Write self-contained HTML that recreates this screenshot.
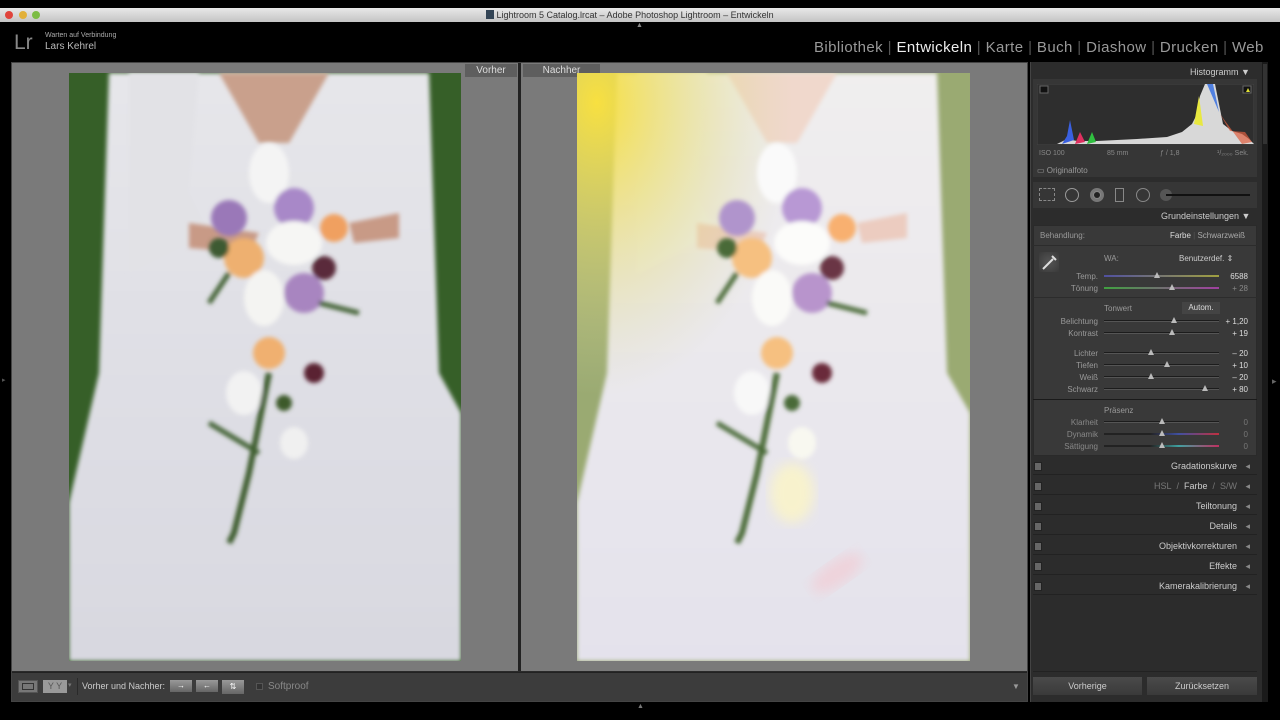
<!DOCTYPE html>
<html><head><meta charset="utf-8"><style>
*{margin:0;padding:0;box-sizing:border-box}
body{width:1280px;height:720px;background:#000;position:relative;overflow:hidden;font-family:"Liberation Sans",sans-serif;color:#bbb}
.a{position:absolute}
.t{position:absolute;white-space:nowrap;font-size:8px;color:#aaa}
.r{text-align:right}
.trk{position:absolute;height:2px;background:#1c1c1c;border-bottom:1px solid #555}
.th{position:absolute;width:0;height:0;border-left:3px solid transparent;border-right:3px solid transparent;border-bottom:6px solid #bbb}
.sec{position:absolute;left:1033px;width:224px;height:18px;border-bottom:1px solid #222;font-size:9px;color:#ccc;text-align:right;padding-right:20px;line-height:18px}
.sec:before{content:"";position:absolute;left:1px;top:5px;width:6px;height:7px;background:#666;border:1px solid #222}
.sec:after{content:"◂";position:absolute;right:7px;top:0;color:#888;font-size:9px}
</style></head><body>
<div class="a" style="left:0;top:8px;width:1280px;height:14px;background:linear-gradient(#e8e8e8,#c4c4c4)"></div>
<div class="a" style="left:5px;top:11px;width:8px;height:8px;border-radius:50%;background:#e0443c"></div>
<div class="a" style="left:19px;top:11px;width:8px;height:8px;border-radius:50%;background:#e2b03a"></div>
<div class="a" style="left:32px;top:11px;width:8px;height:8px;border-radius:50%;background:#7cbc45"></div>
<div class="t" style="left:486px;top:10px;font-size:9px;color:#333"><span style="display:inline-block;width:8px;height:9px;background:#345;vertical-align:-1px"></span> Lightroom 5 Catalog.lrcat – Adobe Photoshop Lightroom – Entwickeln</div>
<div class="t" style="left:14px;top:31px;font-size:21px;color:#888">Lr</div>
<div class="t" style="left:45px;top:32px;font-size:7px;color:#aaa">Warten auf Verbindung</div>
<div class="t" style="left:45px;top:41px;font-size:10px;color:#bbb">Lars Kehrel</div>
<div class="t" style="left:814px;top:39px;font-size:15px;letter-spacing:0.4px;color:#999">Bibliothek <span style="color:#555">|</span> <span style="color:#eee">Entwickeln</span> <span style="color:#555">|</span> Karte <span style="color:#555">|</span> Buch <span style="color:#555">|</span> Diashow <span style="color:#555">|</span> Drucken <span style="color:#555">|</span> Web</div>
<div class="t" style="left:636px;top:22px;font-size:7px;color:#888">▲</div>
<div class="a" style="left:11px;top:62px;width:1017px;height:640px;background:#2a2a2a;border:1px solid #444"></div>
<div class="a" style="left:12px;top:63px;width:506px;height:608px;background:#7a7a7a"></div>
<div class="a" style="left:521px;top:63px;width:506px;height:608px;background:#7a7a7a"></div>
<div class="a" style="left:518px;top:63px;width:3px;height:608px;background:#222"></div>
<div class="a" style="left:465px;top:64px;width:52px;height:13px;background:#5e5e5e;color:#ddd;font-size:10px;text-align:center;line-height:13px">Vorher</div>
<div class="a" style="left:523px;top:64px;width:77px;height:13px;background:#5e5e5e;color:#ddd;font-size:10px;text-align:center;line-height:13px">Nachher</div>
<svg class="a" style="left:69px;top:73px" width="392" height="588" viewBox="0 0 392 588">
<defs>
<linearGradient id="dg" x1="0" y1="0" x2="0" y2="1"><stop offset="0" stop-color="#e6e6ea"/><stop offset="1" stop-color="#d8d8e0"/></linearGradient>
<filter id="bl"><feGaussianBlur stdDeviation="6"/></filter>
<filter id="bl2"><feGaussianBlur stdDeviation="2"/></filter>
</defs>
<rect width="392" height="588" fill="#365f28"/>
<path d="M40 0 L360 0 L370 300 L392 340 L392 588 L0 588 L0 430 L30 300 Z" fill="url(#dg)" filter="url(#bl2)"/>
<path d="M60 0 L130 0 L120 120 L140 160 L60 200 Z" fill="#e2e2e6" filter="url(#bl2)"/>
<path d="M150 0 L260 0 L220 70 L190 70 Z" fill="#c9a08c" filter="url(#bl2)"/>
<path d="M120 150 L190 160 L180 180 L120 175 Z" fill="#c89a86" filter="url(#bl2)"/>
<path d="M280 150 L330 140 L330 165 L285 170 Z" fill="#c89a86" filter="url(#bl2)"/>
<g filter="url(#bl2)">
<ellipse cx="200" cy="100" rx="20" ry="30" fill="#f4f4f4"/>
<circle cx="160" cy="145" r="18" fill="#9a78b8"/><circle cx="225" cy="135" r="20" fill="#a888c8"/>
<circle cx="175" cy="185" r="20" fill="#eeb070"/><circle cx="265" cy="155" r="14" fill="#f0a060"/>
<ellipse cx="225" cy="170" rx="28" ry="22" fill="#f6f6f4"/><circle cx="235" cy="220" r="20" fill="#a885c0"/>
<ellipse cx="195" cy="225" rx="20" ry="28" fill="#f4f4f2"/><circle cx="200" cy="280" r="16" fill="#f0b070"/>
<circle cx="150" cy="175" r="10" fill="#3d5a30"/><circle cx="255" cy="195" r="12" fill="#5a2a3a"/>
<circle cx="245" cy="300" r="10" fill="#5a2030"/><ellipse cx="175" cy="320" rx="18" ry="22" fill="#f2f2f2"/>
<ellipse cx="225" cy="370" rx="14" ry="16" fill="#f0f0f0"/><circle cx="215" cy="330" r="8" fill="#3c5a2c"/>
<path d="M200 300 L180 400 L165 460 L160 470" stroke="#3a5a2a" stroke-width="6" fill="none"/>
<path d="M160 200 L140 230 M250 230 L290 240 M190 380 L140 350" stroke="#3f6030" stroke-width="5" fill="none"/>
</g>
</svg>
<svg class="a" style="left:577px;top:73px" width="393" height="588" viewBox="0 0 393 588">
<defs>
<linearGradient id="dg2" x1="0" y1="0" x2="0" y2="1"><stop offset="0" stop-color="#f0eeee"/><stop offset="1" stop-color="#e4e2ec"/></linearGradient>
<radialGradient id="yg" cx="0.05" cy="0.05" r="0.5"><stop offset="0" stop-color="#f8e040"/><stop offset="1" stop-color="#d8d8a0" stop-opacity="0"/></radialGradient>
</defs>
<rect width="393" height="588" fill="#9aaa72"/>
<path d="M40 0 L360 0 L370 300 L393 340 L393 588 L0 588 L0 430 L30 300 Z" fill="url(#dg2)" filter="url(#bl2)"/>
<path d="M60 0 L130 0 L120 120 L140 160 L60 200 Z" fill="#eeeeee" filter="url(#bl2)"/>
<path d="M150 0 L260 0 L220 70 L190 70 Z" fill="#f0d8cc" filter="url(#bl2)"/>
<path d="M120 150 L190 160 L180 180 L120 175 Z" fill="#ecccc0" filter="url(#bl2)"/>
<path d="M280 150 L330 140 L330 165 L285 170 Z" fill="#ecccc0" filter="url(#bl2)"/>
<rect width="393" height="588" fill="url(#yg)"/>
<g filter="url(#bl2)">
<ellipse cx="200" cy="100" rx="20" ry="30" fill="#fafafa"/>
<circle cx="160" cy="145" r="18" fill="#b094cc"/><circle cx="225" cy="135" r="20" fill="#b898d4"/>
<circle cx="175" cy="185" r="20" fill="#f6c080"/><circle cx="265" cy="155" r="14" fill="#f8b070"/>
<ellipse cx="225" cy="170" rx="28" ry="22" fill="#fcfcfa"/><circle cx="235" cy="220" r="20" fill="#b894cc"/>
<ellipse cx="195" cy="225" rx="20" ry="28" fill="#fafaf8"/><circle cx="200" cy="280" r="16" fill="#f6c080"/>
<circle cx="150" cy="175" r="10" fill="#4a6a38"/><circle cx="255" cy="195" r="12" fill="#6a3444"/>
<circle cx="245" cy="300" r="10" fill="#6a2a3a"/><ellipse cx="175" cy="320" rx="18" ry="22" fill="#f8f8f8"/>
<ellipse cx="225" cy="370" rx="14" ry="16" fill="#f8f8f0"/><circle cx="215" cy="330" r="8" fill="#4a6a38"/>
<path d="M200 300 L180 400 L165 460 L160 470" stroke="#4a6a36" stroke-width="6" fill="none"/>
<path d="M160 200 L140 230 M250 230 L290 240 M190 380 L140 350" stroke="#4a6a38" stroke-width="5" fill="none"/>
</g>
<ellipse cx="215" cy="420" rx="22" ry="30" fill="#fff8c0" opacity=".7" filter="url(#bl)"/>
<ellipse cx="260" cy="500" rx="30" ry="12" fill="#f4c8d0" opacity=".6" filter="url(#bl)" transform="rotate(-35 260 500)"/>
</svg>
<div class="a" style="left:12px;top:672px;width:1015px;height:29px;background:#3c3c3c;border-top:1px solid #222"></div>
<div class="a" style="left:18px;top:680px;width:20px;height:13px;background:#777;border:1px solid #555"><div style="margin:2px 3px;height:7px;border:1px solid #333"></div></div>
<div class="a" style="left:43px;top:680px;width:24px;height:13px;background:#999;color:#555;font-size:9px;text-align:center;line-height:13px">Y Y</div>
<div class="t" style="left:68px;top:681px;font-size:7px;color:#777">▾</div>
<div class="a" style="left:77px;top:678px;width:1px;height:17px;background:#2a2a2a"></div>
<div class="t" style="left:82px;top:681px;font-size:9px;color:#ccc">Vorher und Nachher:</div>
<div class="a" style="left:170px;top:680px;width:22px;height:12px;background:linear-gradient(#999,#666);color:#fff;font-size:8px;text-align:center;line-height:12px">→</div>
<div class="a" style="left:196px;top:680px;width:22px;height:12px;background:linear-gradient(#999,#666);color:#fff;font-size:8px;text-align:center;line-height:12px">←</div>
<div class="a" style="left:222px;top:680px;width:22px;height:14px;background:linear-gradient(#999,#666);color:#fff;font-size:8px;text-align:center;line-height:14px">⇅</div>
<div class="a" style="left:256px;top:683px;width:7px;height:7px;background:#333;border:1px solid #555"></div>
<div class="t" style="left:268px;top:681px;font-size:10px;color:#888">Softproof</div>
<div class="t" style="left:1012px;top:682px;font-size:8px;color:#999">▼</div>
<div class="t" style="left:637px;top:703px;font-size:7px;color:#777">▲</div>
<div class="t" style="left:2px;top:376px;font-size:7px;color:#555">▸</div>
<div class="t" style="left:1272px;top:376px;font-size:9px;color:#666">▸</div>
<div class="a" style="left:1030px;top:62px;width:232px;height:640px;background:#2c2c2c;border-left:1px solid #444"></div>
<div class="a" style="left:1262px;top:62px;width:6px;height:640px;background:#1a1a1a"></div>
<div class="a" style="left:1263px;top:64px;width:4px;height:80px;background:#333"></div>
<div class="t" style="left:1190px;top:67px;font-size:9px;color:#ccc">Histogramm ▼</div>
<div class="a" style="left:1033px;top:79px;width:224px;height:98px;background:#363636"></div>
<svg class="a" style="left:1037px;top:84px" width="217" height="61" viewBox="0 0 217 61">
<rect width="217" height="61" fill="#2e2e2e" stroke="#444"/>
<path d="M20 60 L30 55 L40 57 L60 57 L100 55 L130 53 L145 48 L155 40 L160 30 L163 12 L168 0 L178 0 L182 20 L186 40 L195 47 L205 50 L212 55 L217 60 Z" fill="#d8d8d8"/>
<path d="M157 40 L162 12 L166 42 Z" fill="#e8e840"/>
<path d="M170 0 L176 0 L182 28 Z" fill="#5080e0"/>
<path d="M25 60 L30 52 L33 36 L37 56 Z" fill="#3a60e0"/>
<path d="M38 60 L43 48 L48 58 Z" fill="#e03060"/>
<path d="M50 60 L55 48 L59 58 Z" fill="#30c040"/>
<path d="M183 30 L193 47 L208 48 L215 58 L205 60 Z" fill="#e06040" opacity=".7"/>
<rect x="3" y="2" width="8" height="7" fill="#111" stroke="#666"/><rect x="206" y="2" width="8" height="7" fill="#111" stroke="#666"/>
<path d="M209 8 L211 4 L213 8Z" fill="#dd3"/>
</svg>
<div class="t" style="left:1039px;top:150px;font-size:7px;color:#888">ISO 100</div>
<div class="t" style="left:1107px;top:150px;font-size:7px;color:#888">85 mm</div>
<div class="t" style="left:1160px;top:150px;font-size:7px;color:#888">ƒ / 1,8</div>
<div class="t" style="left:1217px;top:150px;font-size:7px;color:#888">¹/₂₀₀₀ Sek.</div>
<div class="t" style="left:1037px;top:166px;font-size:8px;color:#999">▭ Originalfoto</div>
<div class="a" style="left:1033px;top:182px;width:224px;height:26px;background:#363636"></div>
<div class="a" style="left:1039px;top:188px;width:16px;height:13px;border:1px dashed #888"></div>
<div class="a" style="left:1065px;top:188px;width:14px;height:14px;border:1px solid #999;border-radius:50%"></div>
<div class="a" style="left:1090px;top:188px;width:14px;height:14px;background:#888;border-radius:50%;border:3px solid #777"><div style="width:6px;height:6px;margin:1px;background:#222;border-radius:50%"></div></div>
<div class="a" style="left:1115px;top:188px;width:9px;height:14px;border:1px solid #888"></div>
<div class="a" style="left:1136px;top:188px;width:14px;height:14px;border:1px solid #888;border-radius:50%"></div>
<div class="a" style="left:1160px;top:189px;width:12px;height:12px;background:#555;border-radius:50%"></div>
<div class="a" style="left:1166px;top:194px;width:84px;height:2px;background:#111"></div>
<div class="t" style="left:1161px;top:211px;font-size:9px;color:#ccc">Grundeinstellungen ▼</div>
<div class="a" style="left:1033px;top:225px;width:224px;height:231px;background:#393939;border:1px solid #2a2a2a"></div>
<div class="a" style="left:1033px;top:245px;width:224px;height:1px;background:#2c2c2c"></div>
<div class="a" style="left:1033px;top:297px;width:224px;height:1px;background:#2c2c2c"></div>
<div class="a" style="left:1033px;top:399px;width:224px;height:1px;background:#1a1a1a"></div>
<div class="t" style="left:1040px;top:231px;font-size:8px;color:#999">Behandlung:</div>
<div class="t" style="left:1170px;top:231px;font-size:8px;color:#ddd">Farbe <span style="color:#555">|</span> <span style="color:#aaa">Schwarzweiß</span></div>
<div class="a" style="left:1039px;top:252px;width:20px;height:20px;background:radial-gradient(#555,#393939)"></div>
<svg class="a" style="left:1040px;top:252px" width="20" height="20"><path d="M3 17 L13 7 M12 4 L16 8" stroke="#ddd" stroke-width="2"/></svg>
<div class="t" style="left:1104px;top:254px;font-size:8px;color:#999">WA:</div>
<div class="t" style="left:1179px;top:254px;font-size:8px;color:#ccc">Benutzerdef. ⇕</div>
<div class="t" style="left:1104px;top:304px;font-size:8px;color:#999">Tonwert</div>
<div class="a" style="left:1182px;top:302px;width:38px;height:12px;background:#444;font-size:8px;color:#ddd;text-align:center;line-height:12px">Autom.</div>
<div class="t" style="left:1104px;top:406px;font-size:8px;color:#999">Präsenz</div>
<div class="a" style="left:1104px;top:275px;width:115px;height:2px;background:linear-gradient(90deg,#5050a0,#a0a040)"></div>
<div class="a" style="left:1104px;top:287px;width:115px;height:2px;background:linear-gradient(90deg,#40a040,#a040a0)"></div>
<div class="trk" style="left:1104px;top:320px;width:115px"></div>
<div class="trk" style="left:1104px;top:332px;width:115px"></div>
<div class="trk" style="left:1104px;top:352px;width:115px"></div>
<div class="trk" style="left:1104px;top:364px;width:115px"></div>
<div class="trk" style="left:1104px;top:376px;width:115px"></div>
<div class="trk" style="left:1104px;top:388px;width:115px"></div>
<div class="trk" style="left:1104px;top:421px;width:115px"></div>
<div class="a" style="left:1104px;top:433px;width:115px;height:2px;background:linear-gradient(90deg,#222 40%,#4050a0 65%,#c03040)"></div>
<div class="a" style="left:1104px;top:445px;width:115px;height:2px;background:linear-gradient(90deg,#222 40%,#40a0a0 65%,#c03060)"></div>
<div class="th" style="left:1154px;top:272px"></div><div class="th" style="left:1169px;top:284px"></div>
<div class="th" style="left:1171px;top:317px"></div><div class="th" style="left:1169px;top:329px"></div>
<div class="th" style="left:1148px;top:349px"></div><div class="th" style="left:1164px;top:361px"></div>
<div class="th" style="left:1148px;top:373px"></div><div class="th" style="left:1202px;top:385px"></div>
<div class="th" style="left:1159px;top:418px"></div><div class="th" style="left:1159px;top:430px"></div><div class="th" style="left:1159px;top:442px"></div>
<div class="t r" style="left:1040px;width:58px;top:272px;color:#999">Temp.</div>
<div class="t r" style="left:1040px;width:58px;top:284px;color:#999">Tönung</div>
<div class="t r" style="left:1040px;width:58px;top:317px;color:#999">Belichtung</div>
<div class="t r" style="left:1040px;width:58px;top:329px;color:#999">Kontrast</div>
<div class="t r" style="left:1040px;width:58px;top:349px;color:#999">Lichter</div>
<div class="t r" style="left:1040px;width:58px;top:361px;color:#999">Tiefen</div>
<div class="t r" style="left:1040px;width:58px;top:373px;color:#999">Weiß</div>
<div class="t r" style="left:1040px;width:58px;top:385px;color:#999">Schwarz</div>
<div class="t r" style="left:1040px;width:58px;top:418px;color:#888">Klarheit</div>
<div class="t r" style="left:1040px;width:58px;top:430px;color:#888">Dynamik</div>
<div class="t r" style="left:1040px;width:58px;top:442px;color:#888">Sättigung</div>
<div class="t r" style="left:1210px;width:38px;top:272px;color:#ddd">6588</div>
<div class="t r" style="left:1210px;width:38px;top:284px;color:#888">+ 28</div>
<div class="t r" style="left:1210px;width:38px;top:317px;color:#ddd">+ 1,20</div>
<div class="t r" style="left:1210px;width:38px;top:329px;color:#ddd">+ 19</div>
<div class="t r" style="left:1210px;width:38px;top:349px;color:#ddd">– 20</div>
<div class="t r" style="left:1210px;width:38px;top:361px;color:#ddd">+ 10</div>
<div class="t r" style="left:1210px;width:38px;top:373px;color:#ddd">– 20</div>
<div class="t r" style="left:1210px;width:38px;top:385px;color:#ddd">+ 80</div>
<div class="t r" style="left:1210px;width:38px;top:418px;color:#777">0</div>
<div class="t r" style="left:1210px;width:38px;top:430px;color:#777">0</div>
<div class="t r" style="left:1210px;width:38px;top:442px;color:#777">0</div>
<div class="sec" style="top:457px">Gradationskurve</div>
<div class="sec" style="top:477px"><span style="color:#777">HSL&nbsp; / &nbsp;</span>Farbe<span style="color:#777"> &nbsp;/&nbsp; S/W</span></div>
<div class="sec" style="top:497px">Teiltonung</div>
<div class="sec" style="top:517px">Details</div>
<div class="sec" style="top:537px">Objektivkorrekturen</div>
<div class="sec" style="top:557px">Effekte</div>
<div class="sec" style="top:577px">Kamerakalibrierung</div>
<div class="a" style="left:1033px;top:671px;width:224px;height:1px;background:#222"></div>
<div class="a" style="left:1033px;top:677px;width:109px;height:18px;background:linear-gradient(#4a4a4a,#3a3a3a);font-size:9px;color:#ccc;text-align:center;line-height:18px">Vorherige</div>
<div class="a" style="left:1147px;top:677px;width:110px;height:18px;background:linear-gradient(#4a4a4a,#3a3a3a);font-size:9px;color:#ccc;text-align:center;line-height:18px">Zurücksetzen</div>
</body></html>
